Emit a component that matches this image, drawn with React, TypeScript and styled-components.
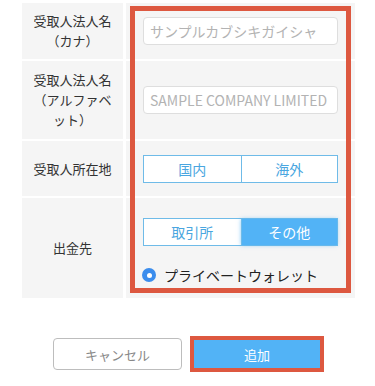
import React from "react";
import styled, { createGlobalStyle } from "styled-components";

const Global = createGlobalStyle`
  html, body { margin: 0; padding: 0; background: #fff; }
  body { font-family: "Noto Sans CJK JP", "Noto Sans", sans-serif; color: #333; }
  * { box-sizing: border-box; }
`;

const Page = styled.div`
  width: 375px;
  height: 386px;
  padding: 3px 20px 0 22px;
`;

const Table = styled.div`
  display: grid;
  grid-template-columns: 101px 229px;
  grid-template-rows: 56px 78px 55px 100px;
  column-gap: 3px;
  row-gap: 2px;
`;

const Label = styled.div<{ $row: number }>`
  grid-column: 1;
  grid-row: ${(p) => p.$row};
  background: #f5f5f5;
  display: flex;
  align-items: center;
  justify-content: center;
  text-align: center;
  font-family: "Noto Sans CJK JP", sans-serif;
  font-size: 13px;
  line-height: 20px;
  color: #333;
  padding: 0 8px;
`;

const Value = styled.div<{ $row: number; $top?: boolean }>`
  grid-column: 2;
  grid-row: ${(p) => p.$row};
  background: #f5f5f5;
  display: flex;
  flex-direction: column;
  justify-content: ${(p) => (p.$top ? "flex-start" : "center")};
  padding: ${(p) => (p.$top ? "20px 17px 0 17px" : "0 17px")};
`;

const Highlight = styled.div`
  grid-column: 2;
  grid-row: 1 / 5;
  margin: 3px 4px 5px 4px;
  border: 5px solid #dd5840;
  pointer-events: none;
  z-index: 2;
`;

const Input = styled.input`
  width: 195px;
  height: 28px;
  border: 1px solid #dedede;
  border-radius: 4px;
  background: #fff;
  padding: 0 6px;
  font-family: "Noto Sans CJK JP", sans-serif;
  font-size: 14px;
  color: #333;
  outline: none;
  &::placeholder { color: #b3b3b3; }
`;

const Segment = styled.div`
  display: grid;
  grid-template-columns: 1fr 1fr;
  width: 195px;
  height: 28px;
  border: 1px solid #6fbbe8;
  background: #fff;
`;

const SegButton = styled.div<{ $active?: boolean; $first?: boolean }>`
  display: flex;
  align-items: center;
  justify-content: center;
  font-family: "Noto Sans CJK JP", sans-serif;
  font-size: 14px;
  color: ${(p) => (p.$active ? "#fff" : "#4aa6e0")};
  background: ${(p) => (p.$active ? "#52b3f6" : "#fff")};
  border-left: ${(p) => (p.$first ? "none" : "1px solid #6fbbe8")};
  box-shadow: ${(p) => (p.$active ? "0 0 4px rgba(82,179,246,0.7)" : "none")};
`;

const RadioRow = styled.label`
  display: flex;
  align-items: center;
  gap: 8px;
  margin-top: 19px;
  margin-left: -1px;
  font-family: "Noto Sans CJK JP", sans-serif;
  font-size: 14px;
  color: #222;
`;

const RadioDot = styled.span`
  width: 14px;
  height: 14px;
  border-radius: 50%;
  background: #3b8ded;
  display: flex;
  align-items: center;
  justify-content: center;
  &::after {
    content: "";
    width: 5px;
    height: 5px;
    border-radius: 50%;
    background: #fff;
  }
`;

const Actions = styled.div`
  display: flex;
  justify-content: center;
  gap: 10px;
  margin-top: 40px;
  margin-left: -22px;
  margin-right: -20px;
`;

const Button = styled.button<{ $primary?: boolean }>`
  width: ${(p) => (p.$primary ? "130px" : "129px")};
  height: 32px;
  border-radius: ${(p) => (p.$primary ? "0" : "4px")};
  font-family: "Noto Sans CJK JP", sans-serif;
  font-size: 13px;
  cursor: pointer;
  border: ${(p) => (p.$primary ? "none" : "1px solid #bdbdbd")};
  background: ${(p) => (p.$primary ? "#52b3f6" : "#fff")};
  color: ${(p) => (p.$primary ? "#fff" : "#888")};
  outline: ${(p) => (p.$primary ? "4px solid #dd5840" : "none")};
  outline-offset: -2px;
`;

export default function App() {
  return (
    <Page>
      <Global />
      <Table>
        <Label $row={1}>受取人法人名<br />（カナ）</Label>
        <Value $row={1}>
          <Input placeholder="サンプルカブシキガイシャ" />
        </Value>
        <Label $row={2}>受取人法人名<br />（アルファベ<br />ット）</Label>
        <Value $row={2}>
          <Input placeholder="SAMPLE COMPANY LIMITED" />
        </Value>
        <Label $row={3}>受取人所在地</Label>
        <Value $row={3}>
          <Segment>
            <SegButton $first>国内</SegButton>
            <SegButton>海外</SegButton>
          </Segment>
        </Value>
        <Label $row={4}>出金先</Label>
        <Value $row={4} $top>
          <Segment>
            <SegButton $first>取引所</SegButton>
            <SegButton $active>その他</SegButton>
          </Segment>
          <RadioRow>
            <RadioDot />
            プライベートウォレット
          </RadioRow>
        </Value>
        <Highlight />
      </Table>
      <Actions>
        <Button>キャンセル</Button>
        <Button $primary>追加</Button>
      </Actions>
    </Page>
  );
}
